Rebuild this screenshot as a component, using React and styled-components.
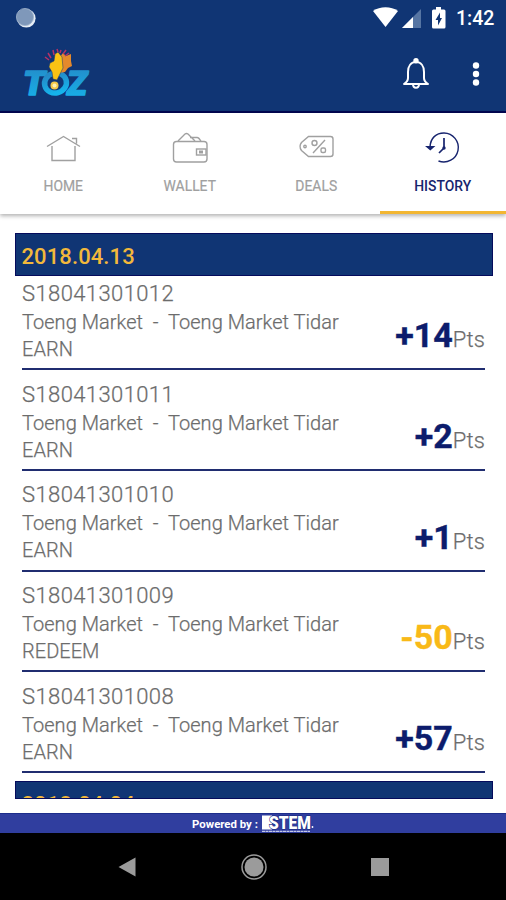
import React from 'react';
import styled, { createGlobalStyle } from 'styled-components';

const GlobalStyle = createGlobalStyle`
  * {
    box-sizing: border-box;
  }
  body {
    margin: 0;
    background: #fff;
    font-family: Roboto, 'Liberation Sans', sans-serif;
  }
`;
const Screen = styled.div`
  width: 506px;
  height: 900px;
  display: flex;
  flex-direction: column;
  overflow: hidden;
  background: #fff;
`;
const Header = styled.header`
  height: 113px;
  flex: none;
  background: #103574;
  border-bottom: 2px solid #020650;
`;
const StatusBar = styled.div`
  height: 36px;
  display: flex;
  align-items: center;
  padding: 0 11px 0 15px;
  color: #fff;
`;
const StatusIcons = styled.div`
  display: flex;
  align-items: center;
  margin-left: auto;
`;
const Clock = styled.span`
  width: 39px;
  margin-left: 9px;
  font-size: 19.5px;
  font-weight: 500;
  line-height: 37px;
  white-space: nowrap;
`;
const Toolbar = styled.div`
  height: 75px;
  display: flex;
  align-items: center;
  padding: 0 20px 0 20px;
`;
const Actions = styled.div`
  display: flex;
  align-items: center;
  gap: 36px;
  margin-left: auto;
`;
const Tabs = styled.nav`
  height: 101px;
  flex: none;
  display: flex;
  background: #fff;
  box-shadow: 0 2px 4px rgba(0, 0, 0, 0.3);
`;
const Tab = styled.div`
  flex: 1;
  display: flex;
  flex-direction: column;
  align-items: center;
  padding-top: 15px;
  color: ${({ $active }) => ($active ? '#17246e' : '#a0a0a0')};
  border-bottom: 3px solid ${({ $active }) => ($active ? '#f2b632' : 'transparent')};
`;
const TabLabel = styled.span`
  margin-top: 10px;
  font-size: 13.9px;
  font-weight: ${({ $active }) => ($active ? 500 : 400)};
  line-height: 17px;
  -webkit-text-stroke: ${({ $active }) => ($active ? 0 : '0.2px')};
`;
const History = styled.main`
  height: 585px;
  flex: none;
  padding: 18.6px 13.5px 0 14.5px;
  overflow: hidden;
`;
const DateBar = styled.h2`
  height: 43.8px;
  margin: 0;
  padding: 0 6px;
  background: #103574;
  border: 1px solid #050b5c;
  color: #f2b83b;
  font-size: 22px;
  font-weight: 500;
  line-height: 45px;
  letter-spacing: 0.1px;
`;
const Row = styled.div`
  height: 93.6px;
  display: flex;
  justify-content: space-between;
  margin: 0 7.5px 7.2px;
  border-bottom: 2px solid #202d70;
  color: #6c6c6c;
`;
const Details = styled.div`
  padding-top: 3.4px;
  white-space: pre;
`;
const Code = styled.div`
  font-size: 22px;
  font-weight: 300;
  line-height: 28px;
  letter-spacing: 0.4px;
  -webkit-text-stroke: 0.25px;
`;
const Lines = styled.div`
  padding-top: 1px;
  font-size: 20px;
  font-weight: 300;
  line-height: 27px;
  letter-spacing: 0.03px;
  -webkit-text-stroke: 0.25px;
`;
const Points = styled.div`
  align-self: flex-end;
  margin-bottom: 8px;
  display: flex;
  align-items: baseline;
  line-height: 40px;
`;
const Amount = styled.b`
  color: ${({ $redeem }) => ($redeem ? '#f9b918' : '#0c1c6c')};
  font-size: 34px;
  font-weight: 700;
  -webkit-text-stroke: 0.4px;
`;
const Unit = styled.span`
  font-size: 22px;
  font-weight: 300;
  letter-spacing: 0.1px;
  -webkit-text-stroke: 0.25px;
`;
const ListEnd = styled.div`
  height: 18px;
  overflow: hidden;
  margin-top: 7.9px;
  border-bottom: 1px solid #050b5c;
`;
const Spacer = styled.div`
  flex: 1;
`;
const Powered = styled.footer`
  height: 20px;
  flex: none;
  display: flex;
  align-items: center;
  justify-content: center;
  gap: 3px;
  background: #303e9f;
  border-top: 1px solid #1d2d8b;
  color: #fff;
  font-size: 11.4px;
  font-weight: 700;
`;
const NavBar = styled.div`
  height: 67px;
  flex: none;
  display: flex;
  align-items: center;
  justify-content: space-between;
  padding: 0 117px 0 117px;
  background: #000;
`;

const SyncIcon = () => (
  <svg width="22" height="22" viewBox="0 0 22 22">
    <circle cx="11.3" cy="11.3" r="9.3" fill="#e6edf5" />
    <circle cx="10" cy="10" r="8.6" fill="#7f98ba" />
    <circle cx="10" cy="10" r="8.6" fill="none" stroke="#9fb3cc" strokeWidth="0.8" />
  </svg>
);

const SignalIcons = () => (
  <svg width="75" height="24" viewBox="0 0 75 24">
    <path d="M1 5C8 0 19 0 26 5L13.5 21Z" fill="#fff" />
    <path d="M49 3V22H30Z" fill="#5675a3" />
    <path d="M41 11V22H30Z" fill="#fff" />
    <path d="M64 1h5v2.5h3q1.5 0 1.5 1.5v16q0 1.500-1.500 1.500H61.500q-1.500 0-1.500-1.500V5q0-1.500 1.500-1.500H64z" fill="#fff" />
    <path d="M68 6.500l-4.500 7.500h2.500v5.500l4-7.500h-2z" fill="#103574" />
  </svg>
);

const Logo = () => (
  <svg width="74" height="54" viewBox="0 0 74 54" overflow="visible">
    <defs>
      <linearGradient id="water" x2="0" y2="1">
        <stop offset="0" stopColor="#2588c5" />
        <stop offset="1" stopColor="#15b4ec" />
      </linearGradient>
    </defs>
    <g fill="url(#water)" stroke="url(#water)" strokeWidth="1.6" strokeLinejoin="round" fontFamily="Roboto, sans-serif" fontWeight="900" fontStyle="italic">
      <text x="3" y="47.500" fontSize="34" textLength="22" lengthAdjust="spacingAndGlyphs">T</text>
      <text x="47" y="47.500" fontSize="34" textLength="20" lengthAdjust="spacingAndGlyphs">Z</text>
    </g>
    <ellipse cx="35.500" cy="36" rx="11" ry="10" transform="rotate(-15 35.500 36)" fill="#103574" stroke="url(#water)" strokeWidth="5.500" />
    <path d="M39 11l4-5 3 3 5-2v7l1 5-4 2-3 4-6 1z" fill="#e5892c" />
    <path d="M30 16l4-2 1-7 3-2 4 5 1 11-4 8-2 4-4-1-1-7-3-5z" fill="#fac214" stroke="#103574" strokeWidth="0.500" />
    <circle cx="34.500" cy="38.500" r="4" fill="#f3c84b" />
    <circle cx="34.500" cy="38.500" r="2" fill="#fff0b2" />
    <path d="M25 10l4 3M28 6l3 5M33 3l1 5M37 2l1 3M41 3l-1 3M46 3l-3 4M49 6l-4 3" stroke="#b63167" strokeWidth="1.500" fill="none" />
  </svg>
);

const BellIcon = () => (
  <svg width="28" height="32" viewBox="0 0 28 32" fill="none" stroke="#fff" strokeWidth="2" strokeLinejoin="round">
    <path d="M14 4c-5 0-8 4-8 10v6c0 3-1 4-4 6h24c-3-2-4-3-4-6v-6c0-6-3-10-8-10z" />
    <path d="M11 26c0 5 6 5 6 0" />
    <circle cx="14" cy="2.700" r="1.700" fill="#fff" />
  </svg>
);

const DotsIcon = () => (
  <svg width="20" height="28" viewBox="0 0 20 28" fill="#fff">
    <circle cx="10" cy="5.500" r="3.200" />
    <circle cx="10" cy="14" r="3.200" />
    <circle cx="10" cy="22.500" r="3.200" />
  </svg>
);

const icons = {
  home: <path d="M4 18.500L20.500 8.500l16.500 10M9 18v14.500h23V18M29 10.500h4.500v5" />,
  wallet: (
    <>
      <rect x="3.500" y="13.500" width="33.500" height="20.500" rx="3" />
      <path d="M8 13l7-7q1.500-1 3 0l7 7M20 9.500h7q2 0 4 4" />
      <rect x="26.500" y="21" width="9.500" height="6" />
      <path d="M31 22.500v3" strokeWidth="4" />
    </>
  ),
  deals: (
    <>
      <path d="M12.500 8.500h22q2.500 0 2.500 2.500v15q0 2.500-2.500 2.500h-22l-7-6q-3-4 0-8z" />
      <path d="M17 25L29 12" />
      <circle cx="18.500" cy="15" r="2.500" />
      <rect x="25" y="20" width="4.500" height="4.500" rx="1.500" />
      <circle cx="9" cy="18.500" r="1.200" />
    </>
  ),
  history: (
    <>
      <path d="M7 19C7.500 10 13 5 21 5a14.500 14.500 0 1 1-5.500 28" />
      <path d="M4 18.800h6.500l-3.200 2.700z" fill="currentColor" />
      <path d="M21 10v10l-5 5" strokeWidth="1.700" />
      <circle cx="21" cy="20" r="1" fill="currentColor" />
    </>
  ),
};

const StemLogo = () => (
  <svg width="53" height="19" viewBox="0 0 53 19" overflow="visible">
    <path d="M1 1.500h10v14H1z" fill="#fff" />
    <text x="8" y="15.200" fill="#fff" stroke="#17287b" strokeWidth="1.200" paintOrder="stroke" fontFamily="Roboto, sans-serif" fontSize="18.500" fontWeight="900" textLength="42" lengthAdjust="spacingAndGlyphs">STEM</text>
    <path d="M1 17.300h48" stroke="#c3c8e8" strokeWidth="1.200" strokeDasharray="3 0.500" />
    <circle cx="51.500" cy="13" r="0.900" fill="#fff" />
  </svg>
);

const tabs = [
  { id: 'home', label: 'HOME' },
  { id: 'wallet', label: 'WALLET' },
  { id: 'deals', label: 'DEALS' },
  { id: 'history', label: 'HISTORY' },
];
const transactions = [
  { code: 'S18041301012', type: 'EARN', amount: 14 },
  { code: 'S18041301011', type: 'EARN', amount: 2 },
  { code: 'S18041301010', type: 'EARN', amount: 1 },
  { code: 'S18041301009', type: 'REDEEM', amount: -50 },
  { code: 'S18041301008', type: 'EARN', amount: 57 },
];

export default function App() {
  return (
    <>
      <GlobalStyle />
      <Screen>
        <Header>
          <StatusBar>
            <SyncIcon />
            <StatusIcons>
              <SignalIcons />
              <Clock>1:42</Clock>
            </StatusIcons>
          </StatusBar>
          <Toolbar>
            <Logo />
            <Actions>
              <BellIcon />
              <DotsIcon />
            </Actions>
          </Toolbar>
        </Header>
        <Tabs>
          {tabs.map(({ id, label }) => (
            <Tab key={id} $active={id === 'history'}>
              <svg width="40" height="40" viewBox="0 0 40 40" fill="none" stroke="currentColor" strokeWidth="1.400">
                {icons[id]}
              </svg>
              <TabLabel $active={id === 'history'}>{label}</TabLabel>
            </Tab>
          ))}
        </Tabs>
        <History>
          <DateBar>2018.04.13</DateBar>
          {transactions.map(({ code, type, amount }) => (
            <Row key={code}>
              <Details>
                <Code>{code}</Code>
                <Lines>
                  <div>{'Toeng Market  -  Toeng Market Tidar'}</div>
                  <div>{type}</div>
                </Lines>
              </Details>
              <Points>
                <Amount $redeem={amount < 0}>{amount > 0 ? `+${amount}` : amount}</Amount>
                <Unit>Pts</Unit>
              </Points>
            </Row>
          ))}
          <ListEnd>
            <DateBar>2018.04.04</DateBar>
          </ListEnd>
        </History>
        <Spacer />
        <Powered>
          <span>Powered by :</span>
          <StemLogo />
        </Powered>
        <NavBar>
          <svg width="20" height="22" viewBox="0 0 20 22">
            <path d="M18.500 1.500v19L1.500 11z" fill="#9b9b9b" />
          </svg>
          <svg width="26" height="26" viewBox="0 0 26 26">
            <circle cx="13" cy="13" r="12" fill="none" stroke="#9b9b9b" strokeWidth="1.500" />
            <circle cx="13" cy="13" r="9.500" fill="#9b9b9b" />
          </svg>
          <svg width="18" height="18" viewBox="0 0 18 18">
            <path d="M0 0h18v18H0z" fill="#9b9b9b" />
          </svg>
        </NavBar>
      </Screen>
    </>
  );
}
